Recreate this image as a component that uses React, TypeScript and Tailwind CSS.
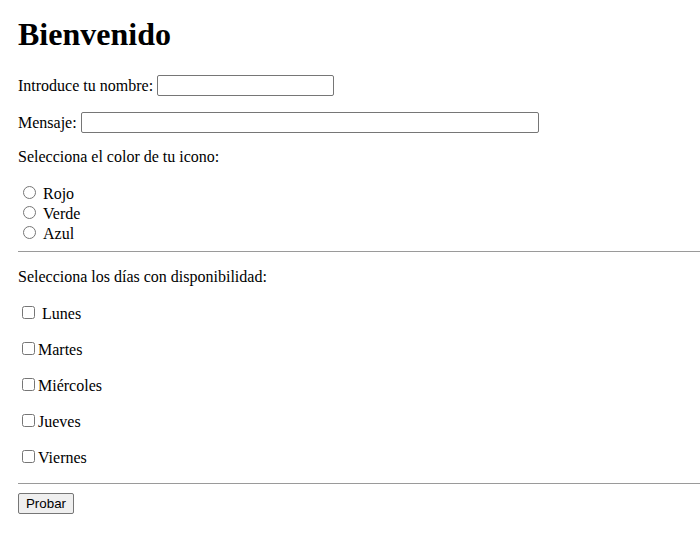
import React from "react";

const dias = [
  { label: "Lunes", gap: true },
  { label: "Martes", gap: false },
  { label: "Miércoles", gap: false },
  { label: "Jueves", gap: false },
  { label: "Viernes", gap: false },
];

function App() {
  return (
    <div className="min-h-[556px] bg-white pl-[18px] pt-[16px] text-[16px] text-black font-['Liberation_Serif','Times_New_Roman',serif]">
      <h1 className="h-[37px] text-[32px] font-bold leading-[37px]">Bienvenido</h1>

      {/* nombre */}
      <div className="mt-[22px] flex h-[21px] items-center">
        <label htmlFor="nombre">Introduce tu nombre:</label>
        <input
          id="nombre"
          type="text"
          className="ml-[4px] h-[21px] w-[177px] rounded-[2px] border border-[#767676] bg-white px-[2px] outline-none"
        />
      </div>

      {/* mensaje */}
      <div className="mt-[16px] flex h-[21px] items-center">
        <label htmlFor="mensaje">Mensaje:</label>
        <input
          id="mensaje"
          type="text"
          className="ml-[4px] h-[21px] w-[458px] rounded-[2px] border border-[#767676] bg-white px-[2px] outline-none"
        />
      </div>

      <p className="mt-[14px] h-[20px] leading-[20px]">Selecciona el color de tu icono:</p>

      <div className="mt-[15px]">
        {["Rojo", "Verde", "Azul"].map((c) => (
          <label key={c} className="flex h-[20px] items-center">
            <input type="radio" name="color" className="ml-[5px] mr-[3px] h-[13px] w-[13px]" />
            <span className="ml-[4px] translate-y-[2px]">{c}</span>
          </label>
        ))}
      </div>

      <hr className="mt-[9px] border-0 border-t border-t-[#9a9a9a]" />

      <p className="mt-[15px] h-[20px] leading-[20px]">Selecciona los días con disponibilidad:</p>

      {dias.map((d) => (
        <label key={d.label} className="mt-[16px] flex h-[20px] items-center">
          <input type="checkbox" className="ml-[4px] mr-[3px] h-[13px] w-[13px] -translate-y-[1px]" />
          <span className={d.gap ? "ml-[4px] translate-y-[1px]" : "translate-y-[1px]"}>{d.label}</span>
        </label>
      ))}

      <hr className="mt-[16px] border-0 border-t border-t-[#9a9a9a]" />

      <button className="mt-[9px] h-[21px] w-[56px] rounded-[2px] border border-[#767676] bg-[#efefef] text-[13.33px] leading-[15px] font-['Liberation_Sans',Arial,sans-serif]">
        Probar
      </button>
    </div>
  );
}

export default App;
